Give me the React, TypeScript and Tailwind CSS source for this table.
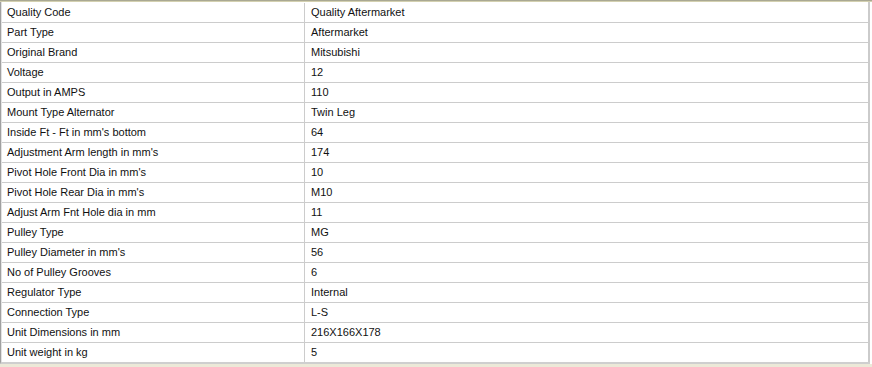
const specs: [string, string][] = [
  ["Quality Code", "Quality Aftermarket"],
  ["Part Type", "Aftermarket"],
  ["Original Brand", "Mitsubishi"],
  ["Voltage", "12"],
  ["Output in AMPS", "110"],
  ["Mount Type Alternator", "Twin Leg"],
  ["Inside Ft - Ft in mm's bottom", "64"],
  ["Adjustment Arm length in mm's", "174"],
  ["Pivot Hole Front Dia in mm's", "10"],
  ["Pivot Hole Rear Dia in mm's", "M10"],
  ["Adjust Arm Fnt Hole dia in mm", "11"],
  ["Pulley Type", "MG"],
  ["Pulley Diameter in mm's", "56"],
  ["No of Pulley Grooves", "6"],
  ["Regulator Type", "Internal"],
  ["Connection Type", "L-S"],
  ["Unit Dimensions in mm", "216X166X178"],
  ["Unit weight in kg", "5"],
]

export default function App() {
  return (
    <div
      className="w-[872px] h-[367px] bg-[#ece9d8] text-[11px] text-[#111111] overflow-hidden"
      style={{ fontFamily: '"Liberation Sans", Arial, sans-serif' }}
    >
      <div className="h-px bg-[#a9a893]" />
      <div className="h-px bg-[#d3d0b0]" />
      <div className="flex">
        <div className="w-[870px] flex bg-white border-l border-[#a0a0a0] border-b-2 border-b-[#cfcfcf]">
          <div className="w-px bg-[#e2e2e2]" />
          <div className="flex-1 flex flex-col pt-px border-r-2 border-[#cbcbcb]">
            {specs.map(([label, value], i) => {
              const last = i === specs.length - 1
              return (
                <div
                  key={label}
                  className={last ? "flex h-[19px]" : "flex h-[20px] border-b border-[#cccccc]"}
                >
                  <div className="w-[303px] pl-[5px] flex items-center border-r border-[#cccccc]">
                    {label}
                  </div>
                  <div className="flex-1 pl-[6px] flex items-center">{value}</div>
                </div>
              )
            })}
          </div>
        </div>
        <div className="w-[2px] bg-white h-[362px]" />
      </div>
    </div>
  )
}
